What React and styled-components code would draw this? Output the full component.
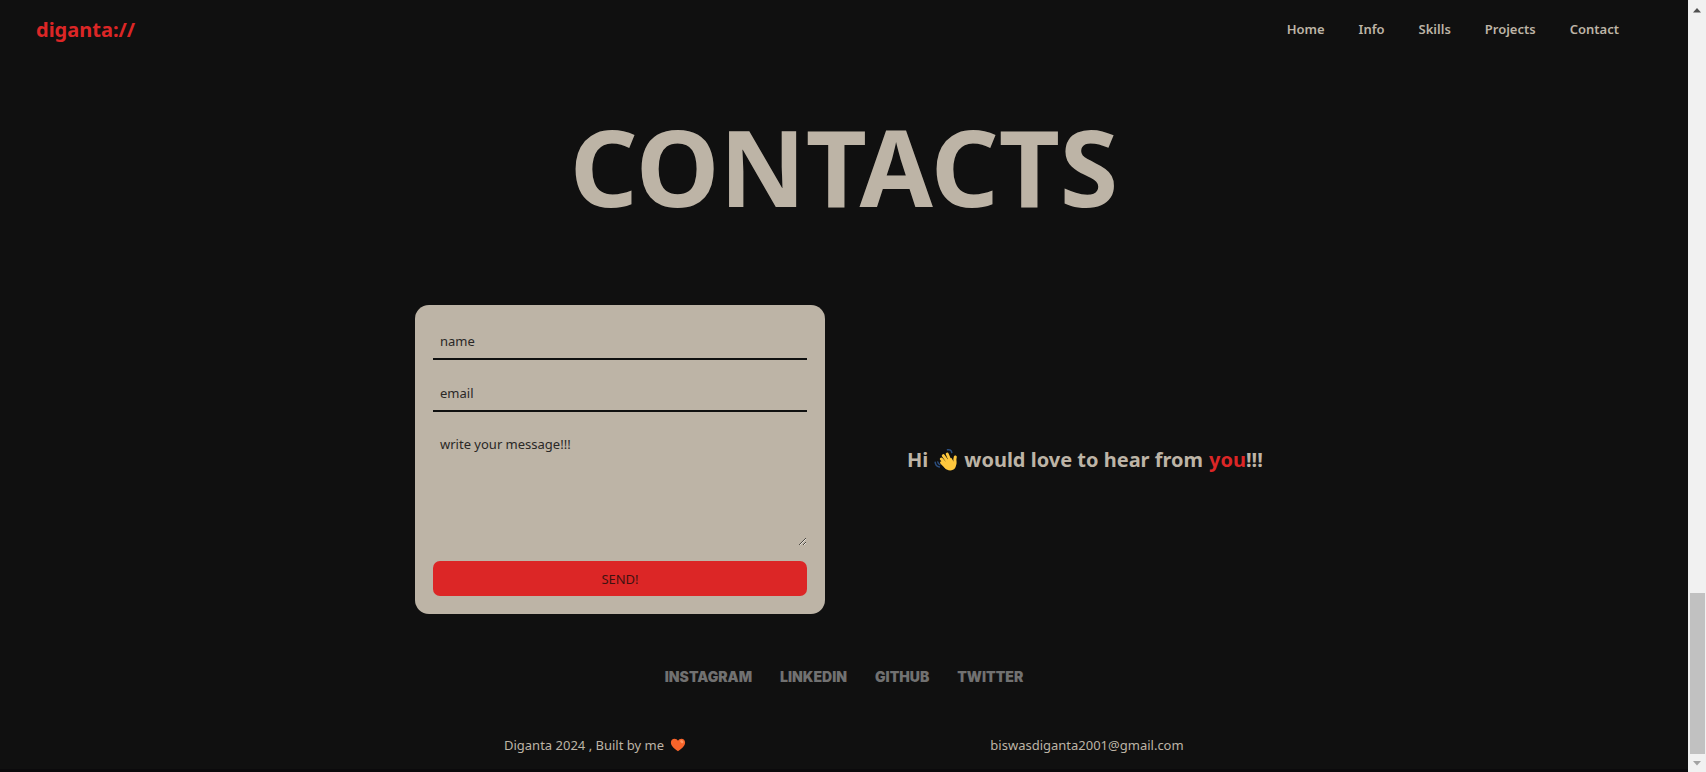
import React from "react";
import styled, { createGlobalStyle } from "styled-components";

const ink = "#101010";
const sand = "#bdb4a6";
const red = "#dc2626";

const GlobalStyle = createGlobalStyle`
  *, *::before, *::after { box-sizing: border-box; }
  body {
    margin: 0;
    background: ${ink};
    color: ${sand};
    font-family: "Noto Sans", "Open Sans", sans-serif;
    font-size: 13px;
    line-height: 20px;
  }
  a { color: inherit; text-decoration: none; }
`;

const Shell = styled.div`
  display: flex;
  min-height: 100vh;
`;

const Page = styled.div`
  flex: 1;
  min-width: 0;
  display: flex;
  flex-direction: column;
  border-bottom: 3px solid #0b0a0c;
`;

const Header = styled.header`
  display: flex;
  align-items: center;
  justify-content: space-between;
  height: 60px;
  padding: 0 69px 0 36px;
`;

const Brand = styled.a`
  && { color: ${red}; }
  font-size: 20px;
  font-weight: 700;
  line-height: 28px;
`;

const Nav = styled.nav`
  display: flex;
  gap: 34px;
  padding-bottom: 2px;
  font-weight: 600;
`;

const Title = styled.h1`
  margin: 50px 0 83px;
  font-size: 106px;
  font-weight: 700;
  line-height: 112px;
  text-align: center;
`;

const Main = styled.main`
  display: grid;
  grid-template-columns: 410px 366px;
  justify-content: center;
  align-items: center;
  gap: 82px;
`;

const Form = styled.form`
  display: flex;
  flex-direction: column;
  gap: 15px;
  padding: 18px;
  border-radius: 14px;
  background: ${sand};
`;

const Field = styled.input`
  width: 100%;
  height: 37px;
  padding: 0 7px;
  border: 0;
  border-bottom: 2px solid ${ink};
  border-radius: 0;
  background: transparent;
  color: ${ink};
  font: inherit;
  outline: 0;
  &::placeholder { color: #2a2826; opacity: 1; }
`;

const Message = styled(Field)`
  display: block;
  height: 119px;
  padding: 7px;
  border: 0;
  resize: both;
`;

const Send = styled.button`
  height: 35px;
  padding: 0;
  border: 0;
  border-radius: 7px;
  background: ${red};
  color: #3f1210;
  font: inherit;
`;

const Greeting = styled.p`
  display: flex;
  align-items: center;
  gap: 6px;
  margin: 0;
  font-size: 20px;
  font-weight: 700;
  line-height: 28px;
  white-space: nowrap;
`;

const Accent = styled.span`
  color: ${red};
`;

const Socials = styled.nav`
  display: flex;
  justify-content: center;
  gap: 28px;
  margin-top: 53px;
  color: #717171;
  font-family: Inter, sans-serif;
  font-size: 14px;
  font-weight: 900;
`;

const Footer = styled.footer`
  display: grid;
  grid-template-columns: 492px 492px;
  justify-content: center;
  justify-items: center;
  margin-top: 48px;
  padding: 0 6px 12px 0;
`;

const Credit = styled.span`
  display: flex;
  align-items: center;
  gap: 6px;
`;

const ScrollTrack = styled.div`
  position: sticky;
  top: 0;
  flex: none;
  display: flex;
  flex-direction: column;
  align-items: center;
  width: 18px;
  height: 100vh;
  background: #f1f1f1;
`;

const ScrollArrow = styled.svg`
  flex: none;
  width: 18px;
  height: 18px;
`;

const ScrollSpace = styled.div`
  flex: 575;
`;

const ScrollThumb = styled.div`
  flex: 161;
  width: 15px;
  background: #c1c1c1;
`;

const links = ["Home", "Info", "Skills", "Projects", "Contact"];
const socials = ["INSTAGRAM", "LINKEDIN", "GITHUB", "TWITTER"];

function Wave() {
  return (
    <svg width="24" height="24" viewBox="0 0 24 24" role="img" aria-label="waving hand">
      <g fill="none" stroke="#2c4f80" strokeWidth="1.5" strokeLinecap="round">
        <path d="M13.500 1.800c2.300-.6 4 .6 4.300 2.800" />
        <path d="M1.200 14.200c.2 2.600 1.700 4.300 4.200 4.700" />
        <path d="M3.800 14c.2 1.300.9 2.200 2 2.600" />
      </g>
      <g fill="none" stroke="#ffc83d" strokeWidth="3" strokeLinecap="round">
        <path d="m7.600 14.600 5 5" />
        <path d="m7.300 11 5.600 6" />
        <path d="m9.300 7.700 5 7" />
        <path d="m13.200 6 3.500 8" />
        <path d="M21.300 9c-.8 2.500-.2 4.500-.5 7" />
      </g>
      <path fill="#ffc83d" d="m11 14 3-3 3.500-1 2 3.500 2.700-1c.5 4.500-.3 8-3.200 9.300-3.200 1.500-6.700.3-9-3Z" />
    </svg>
  );
}

function Heart() {
  return (
    <svg width="16" height="16" viewBox="0 0 16 16" role="img" aria-label="orange heart">
      <path fill="#f8642a" d="M8 14.300C4.300 12 .9 8.900.9 5.600.9 3.300 2.500 1.700 4.500 1.700c1.500 0 2.800.8 3.500 2.100.7-1.300 2-2.100 3.500-2.100 2 0 3.600 1.600 3.600 3.900 0 3.300-3.400 6.400-7.100 8.700Z" />
      <ellipse cx="11.800" cy="4.600" rx="1.800" ry="1.300" fill="#ff9560" transform="rotate(35 11.800 4.600)" />
    </svg>
  );
}

export default function App() {
  return (
    <>
      <GlobalStyle />
      <Shell>
        <Page>
          <Header>
            <Brand href="#home">diganta://</Brand>
            <Nav aria-label="Main">
              {links.map((name) => (
                <a key={name} href={`#${name.toLowerCase()}`}>{name}</a>
              ))}
            </Nav>
          </Header>
          <Title>CONTACTS</Title>
          <Main>
            <Form onSubmit={(event) => event.preventDefault()}>
              <Field type="text" name="name" placeholder="name" aria-label="name" />
              <Field type="email" name="email" placeholder="email" aria-label="email" />
              <Message as="textarea" name="message" placeholder="write your message!!!" aria-label="message" />
              <Send type="submit">SEND!</Send>
            </Form>
            <Greeting>
              <span>Hi</span>
              <Wave />
              <span>would love to hear from</span>
              <span><Accent>you</Accent>!!!</span>
            </Greeting>
          </Main>
          <Socials aria-label="Social profiles">
            {socials.map((name) => (
              <a key={name} href={`#${name.toLowerCase()}`}>{name}</a>
            ))}
          </Socials>
          <Footer>
            <Credit>Diganta 2024 , Built by me <Heart /></Credit>
            <a href="mailto:biswasdiganta2001@gmail.com">biswasdiganta2001@gmail.com</a>
          </Footer>
        </Page>
        <ScrollTrack aria-hidden="true">
          <ScrollArrow viewBox="0 0 18 18"><path d="M5 12.500h8l-4-4.500Z" fill="#505050" /></ScrollArrow>
          <ScrollSpace />
          <ScrollThumb />
          <ScrollArrow viewBox="0 0 18 18"><path d="M5 7h8l-4 4.500Z" fill="#a3a3a3" /></ScrollArrow>
        </ScrollTrack>
      </Shell>
    </>
  );
}
